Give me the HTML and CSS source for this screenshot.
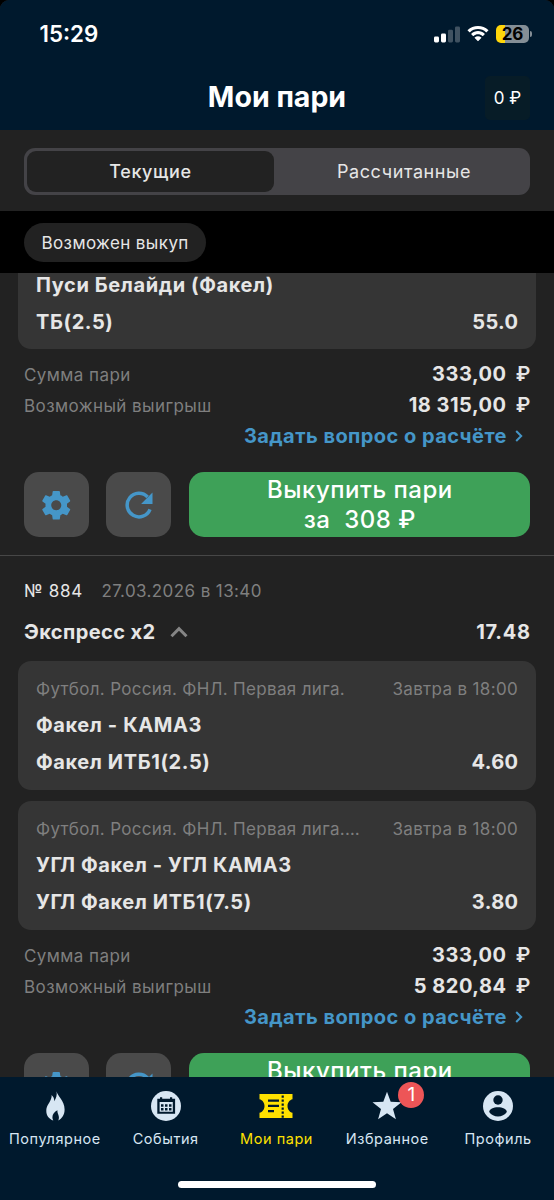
FILE: index.html
```html
<!DOCTYPE html>
<html lang="ru">
<head>
<meta charset="utf-8">
<title>Мои пари</title>
<link rel="stylesheet" href="styles.css">
</head>
<body>
<svg class="defs" width="0" height="0" aria-hidden="true">
  <symbol id="gear" viewBox="0 0 24 24"><path d="M19.43 12.98c.04-.32.07-.64.07-.98s-.03-.66-.07-.98l2.11-1.65c.19-.15.24-.42.12-.64l-2-3.46c-.12-.22-.39-.3-.61-.22l-2.49 1c-.52-.4-1.08-.73-1.69-.98l-.38-2.65C14.46 2.18 14.25 2 14 2h-4c-.25 0-.46.18-.49.42l-.38 2.65c-.61.25-1.17.59-1.69.98l-2.49-1c-.23-.09-.49 0-.61.22l-2 3.46c-.13.22-.07.49.12.64l2.11 1.65c-.04.32-.07.65-.07.98s.03.66.07.98l-2.11 1.65c-.19.15-.24.42-.12.64l2 3.46c.12.22.39.3.61.22l2.49-1c.52.4 1.08.73 1.69.98l.38 2.65c.03.24.24.42.49.42h4c.25 0 .46-.18.49-.42l.38-2.65c.61-.25 1.17-.59 1.69-.98l2.49 1c.23.09.49 0 .61-.22l2-3.46c.12-.22.07-.49-.12-.64l-2.11-1.65zM12 15.5c-1.93 0-3.5-1.57-3.5-3.5s1.57-3.5 3.5-3.5 3.5 1.57 3.5 3.5-1.57 3.5-3.5 3.5z"/></symbol>
  <symbol id="reload" viewBox="0 0 28 28"><path d="M25 18.300A11.800 11.800 0 1 1 22.600 6" fill="none" stroke="currentColor" stroke-width="3.500"/><path d="M27.500 1.500v11.400H16.100z"/></symbol>
</svg>
<div class="app">
  <header class="header">
    <div class="status">
      <span class="clock">15:29</span>
      <div class="status-icons">
        <svg class="signal" viewBox="0 0 26 17"><rect x="0" y="10.5" width="5" height="6" rx="1.4"/><rect x="7" y="7.5" width="5" height="9" rx="1.4"/><rect class="dim" x="14" y="3.8" width="5" height="12.7" rx="1.4"/><rect class="dim" x="21" y="0.5" width="5" height="16" rx="1.4"/></svg>
        <svg class="wifi" viewBox="0 0 22 16"><path d="M11 3.1c3.1 0 5.9 1.2 8 3.2.2.1.4.1.5 0L21.3 4.600c.2-.2.2-.4 0-.6C18.500 1.400 15 0 11 0S3.500 1.400.700 4c-.2.200-.2.400 0 .600L2.500 6.300c.1.1.3.1.5 0 2.100-2 4.900-3.200 8-3.200zM11 8.300c1.700 0 3.200.6 4.400 1.700.2.200.4.200.6 0l1.700-1.700c.2-.2.2-.4 0-.6-1.800-1.700-4.200-2.700-6.700-2.700s-4.900 1-6.700 2.700c-.2.2-.2.4 0 .6L6 10c.2.200.4.200.6 0 1.200-1.100 2.700-1.700 4.400-1.700zM14.300 12c.2-.2.2-.4 0-.6-2-1.700-4.600-1.700-6.600 0-.2.200-.2.400 0 .6l3 3.100c.2.200.4.200.6 0z"/></svg>
        <div class="battery"><span class="battery-body">26</span><span class="battery-tip"></span></div>
      </div>
    </div>
    <div class="title-bar">
      <h1 class="title">Мои пари</h1>
      <div class="balance">0 ₽</div>
    </div>
  </header>

  <div class="tabs-wrap">
    <div class="tabs"><div class="tab tab-active">Текущие</div><div class="tab">Рассчитанные</div></div>
  </div>
  <div class="filters"><span class="chip">Возможен выкуп</span></div>

  <main class="list">
    <section class="bet">
      <div class="card card-cut">
        <div class="row strong"><span>Пуси Белайди (Факел)</span></div>
        <div class="row strong"><span>ТБ(2.5)</span><span class="odds">55.0</span></div>
      </div>
      <div class="summary">
        <div class="sum"><span class="label">Сумма пари</span><span class="money">333,00 <i>₽</i></span></div>
        <div class="sum"><span class="label">Возможный выигрыш</span><span class="money">18 315,00 <i>₽</i></span></div>
        <div class="ask">Задать вопрос о расчёте<svg class="ask-arrow" viewBox="0 0 8 12"><path d="M1.200 1l5 5-5 5"/></svg></div>
      </div>
      <div class="actions">
        <div class="square"><svg class="gear"><use href="#gear"/></svg></div>
        <div class="square"><svg class="reload"><use href="#reload"/></svg></div>
        <div class="buyout"><span>Выкупить пари</span><span>за&nbsp; 308 ₽</span></div>
      </div>
    </section>

    <section class="bet">
      <div class="meta"><span class="num">№ 884</span><span class="date">27.03.2026 в 13:40</span></div>
      <div class="kind"><span>Экспресс x2</span><svg class="caret" viewBox="0 0 18 12"><path d="M1.500 10.200L9 2.700l7.500 7.500"/></svg><span class="total">17.48</span></div>
      <div class="card">
        <div class="row league"><span>Футбол. Россия. ФНЛ. Первая лига.</span><span>Завтра в 18:00</span></div>
        <div class="row strong"><span>Факел - КАМАЗ</span></div>
        <div class="row strong"><span>Факел ИТБ1(2.5)</span><span class="odds">4.60</span></div>
      </div>
      <div class="card">
        <div class="row league"><span>Футбол. Россия. ФНЛ. Первая лига.…</span><span>Завтра в 18:00</span></div>
        <div class="row strong"><span>УГЛ Факел - УГЛ КАМАЗ</span></div>
        <div class="row strong"><span>УГЛ Факел ИТБ1(7.5)</span><span class="odds">3.80</span></div>
      </div>
      <div class="summary">
        <div class="sum"><span class="label">Сумма пари</span><span class="money">333,00 <i>₽</i></span></div>
        <div class="sum"><span class="label">Возможный выигрыш</span><span class="money">5 820,84 <i>₽</i></span></div>
        <div class="ask">Задать вопрос о расчёте<svg class="ask-arrow" viewBox="0 0 8 12"><path d="M1.200 1l5 5-5 5"/></svg></div>
      </div>
      <div class="actions">
        <div class="square"><svg class="gear"><use href="#gear"/></svg></div>
        <div class="square"><svg class="reload"><use href="#reload"/></svg></div>
        <div class="buyout"><span>Выкупить пари</span></div>
      </div>
    </section>
  </main>

  <nav class="nav">
    <div class="items">
      <div class="item"><svg class="nav-icon" viewBox="0 0 34 30"><path d="M18.600 0.300c.6 4.600 8 9.300 8 18.200 0 5.200-2.600 9.200-6.400 11 .7-1.600.9-3 .5-4.600-.5-2-1.500-3.200-1.300-5.700-3 1.600-5 4-5 7 0 1.300.3 2.300.9 3.300-4.200-1.500-7-5-7-9.600 0-5 3-7.400 4.600-11.600.7-1.700.8-2.600.7-4.200 2 1.800 2.700 3.700 2.700 6.200 2-3.300 2.800-6.300 2.300-10z"/></svg><span>Популярное</span></div>
      <div class="item"><svg class="nav-icon" viewBox="0 0 34 30"><circle cx="17" cy="15" r="15"/><g class="ink"><path d="M8.300 7.800h17.800v15H8.300zM10.600 11v9.800h13.200V11z" fill-rule="evenodd"/><path d="M11 6.200h2.200v3H11zM21 6.200h2.200v3H21z"/><path d="M12 13.300h2.500v2.500H12zM16 13.300h2.500v2.500H16zM20 13.300h2.500v2.500H20zM12 17h2.500v2.500H12zM16 17h2.500v2.500H16zM20 17h2.500v2.500H20z"/></g></svg><span>События</span></div>
      <div class="item active"><svg class="nav-icon" viewBox="0 0 34 30"><path d="M.5 3h33v5.200c-3 .7-5 3.500-5 6.800s2 6.100 5 6.800V27H.5v-5.200c3-.7 5-3.500 5-6.800s-2-6.100-5-6.800z"/><g class="ink"><path d="M9 8.500h11v2.300H9zM9 13.800h11V16H9zM9 19h6v2.300H9z"/><path d="M22.600 4.500h2.200v2.200h-2.200zM22.600 8.500h2.200v2.200h-2.200zM22.600 12.500h2.200v2.200h-2.200zM22.600 16.500h2.200v2.200h-2.200zM22.600 20.500h2.200v2.200h-2.200zM22.600 24.500h2.200v2.200h-2.200z"/></g></svg><span>Мои пари</span></div>
      <div class="item"><div class="badged"><svg class="nav-icon" viewBox="0 0 34 30"><path d="M17 0.800l3.700 10 10.800.4-8.500 6.700 2.900 10.400-8.900-6-8.900 6L11 17.900l-8.500-6.700 10.800-.4z"/></svg><b class="badge">1</b></div><span>Избранное</span></div>
      <div class="item"><svg class="nav-icon" viewBox="0 0 34 30"><circle cx="17" cy="15" r="15"/><g class="ink"><circle cx="17" cy="9" r="4.700"/><path d="M17 16.200c4.500 0 8.800 2 8.800 4.700-2 2.900-5.100 4.500-8.800 4.500s-6.800-1.600-8.800-4.500c0-2.700 4.300-4.700 8.800-4.700z"/></g></svg><span>Профиль</span></div>
    </div>
    <div class="home"></div>
  </nav>
</div>
</body>
</html>
```
FILE: styles.css
```css
* { box-sizing: border-box; }
body { margin: 0; background: #000; font-family: Inter, "Open Sans", sans-serif; color: #e6e6e6; }
.defs { position: absolute; }
svg { display: block; fill: currentColor; }
.app { width: 554px; height: 1200px; display: flex; flex-direction: column; overflow: hidden; border-radius: 9px 9px 0 0; background: #222; }

.header { height: 130px; flex: none; background: #00192d; color: #fff; }
.status { height: 68px; padding: 0 22px 0 40px; display: flex; justify-content: space-between; align-items: center; }
.clock { margin-left: -.5px; margin-top: -1px; font-size: 22.300px; font-weight: 600; }
.status-icons { display: flex; align-items: center; gap: 7px; }
.signal { width: 26px; height: 17px; }
.dim { opacity: .25; }
.wifi { width: 22px; height: 16px; }
.battery { display: flex; align-items: center; gap: 1px; }
.battery-body { width: 33px; height: 18px; border-radius: 5px; background: linear-gradient(90deg, #ffd60a 26%, #848e96 26%); color: #000; font-size: 17px; font-weight: 700; line-height: 18px; text-align: center; }
.battery-tip { width: 2px; height: 6px; border-radius: 0 3px 3px 0; background: #848e96; }
.title-bar { height: 62px; display: grid; grid-template-columns: 1fr auto 1fr; padding: 7px 24px 9px; align-items: center; }
.title { grid-column: 2; margin: -3px 0 0; font-size: 28.500px; line-height: 46px; font-weight: 700; }
.balance { justify-self: end; width: 45px; height: 44px; border-radius: 5px; background: #071c27; font-size: 17px; line-height: 44px; text-align: center; white-space: nowrap; }

.tabs-wrap { height: 81px; padding: 18px 24px 16px; flex: none; }
.tabs { height: 47px; padding: 3px; display: flex; border-radius: 11px; background: #444347; }
.tab { flex: 1 1 253px; padding-left: 7px; line-height: 41px; font-size: 18px; letter-spacing: .6px; text-align: center; }
.tab-active { flex-basis: 247px; flex-grow: 0; padding-left: 0; border-radius: 9px; background: #222; font-weight: 500; }
.filters { height: 62px; padding: 12px 24px; background: #000; flex: none; }
.chip { display: inline-block; height: 39px; padding: 0 17.500px; border-radius: 20px; background: #222; font-size: 17px; line-height: 40px; letter-spacing: .4px; }

.list { height: 804px; overflow: hidden; flex: none; }
.bet + .bet { border-top: 1px solid #474747; }
.card { margin: 0 18px; padding: 15px 18px 15.500px; display: grid; gap: 13px; border-radius: 13px; background: #353535; }
.card + .card { margin-top: 11.500px; margin-bottom: .5px; }
.card-cut { margin-bottom: .5px; padding-top: 0; padding-bottom: 15px; border-radius: 0 0 13px 13px; }
.row { display: flex; justify-content: space-between; line-height: 24px; height: 24px; white-space: nowrap; }
.strong { font-size: 20px; font-weight: 700; letter-spacing: .6px; }
.odds { margin-right: -.5px; letter-spacing: .4px; }
.league { padding-top: .5px; font-size: 17px; color: #7f7f7f; letter-spacing: .33px; }
.summary { padding: 9px 24px 20.500px; }
.sum { height: 31px; display: flex; justify-content: space-between; align-items: center; white-space: nowrap; }
.label { padding-top: 2px; font-size: 17px; color: #7f7f7f; letter-spacing: .42px; }
.money { margin-right: -.8px; font-size: 20px; font-weight: 700; letter-spacing: .5px; }
.money i { font-style: normal; font-weight: 600; margin-left: 4px; }
.ask { height: 31px; display: flex; justify-content: flex-end; align-items: center; gap: 7.500px; padding-right: 7.500px; color: #4596c8; font-size: 20px; font-weight: 650; letter-spacing: .45px; white-space: nowrap; }
.ask-arrow { width: 8px; height: 12px; fill: none; stroke: currentColor; stroke-width: 2; }
.actions { display: flex; padding: 0 24px 18px; }
.square { width: 65px; height: 65px; margin-right: 17.400px; display: grid; place-items: center; border-radius: 15px; background: #4a4a4a; color: #4596c8; }
.gear { width: 34.500px; height: 34.500px; margin-top: 2px; }
.reload { width: 28px; height: 28px; margin-top: 1px; }
.buyout { flex: 1; height: 65px; padding: 3px 0 0 1px; border-radius: 15px; background: #3ea158; color: #fff; display: flex; flex-direction: column; align-items: center; font-size: 24px; line-height: 30px; font-weight: 500; letter-spacing: .5px; white-space: nowrap; }
.meta { height: 30px; margin: 20px 24px 11px; display: flex; align-items: center; gap: 18.500px; font-size: 17px; }
.num { letter-spacing: .7px; }
.date { color: #7f7f7f; letter-spacing: .4px; }
.kind { height: 30px; margin: 0 24px 14px; display: flex; align-items: center; font-size: 20px; font-weight: 700; letter-spacing: .4px; }
.caret { width: 18px; height: 12px; margin-left: 15px; fill: none; stroke: #858585; stroke-width: 3; }
.total { margin-left: auto; letter-spacing: .7px; margin-right: -.7px; }

.nav { flex: 1; background: #00192d; color: #d7e6f3; }
.items { display: grid; grid-template-columns: repeat(5, 1fr); height: 108px; }
.item { display: flex; flex-direction: column; align-items: center; gap: 8px; padding: 14px 1px 0 0; font-size: 14.500px; line-height: 20px; letter-spacing: .55px; white-space: nowrap; }
.nav-icon { width: 34px; height: 30px; }
.ink { fill: #00192d; }
.active { color: #ffe100; }
.badged { position: relative; }
.badge { position: absolute; left: 28px; top: -9px; width: 26px; height: 26px; border-radius: 50%; background: #ed5557; color: #fff; font-size: 19px; line-height: 26px; font-weight: 400; text-align: center; letter-spacing: 0; }
.home { width: 198px; height: 7px; margin: -4px auto 0; border-radius: 4px; background: #fff; }
```
